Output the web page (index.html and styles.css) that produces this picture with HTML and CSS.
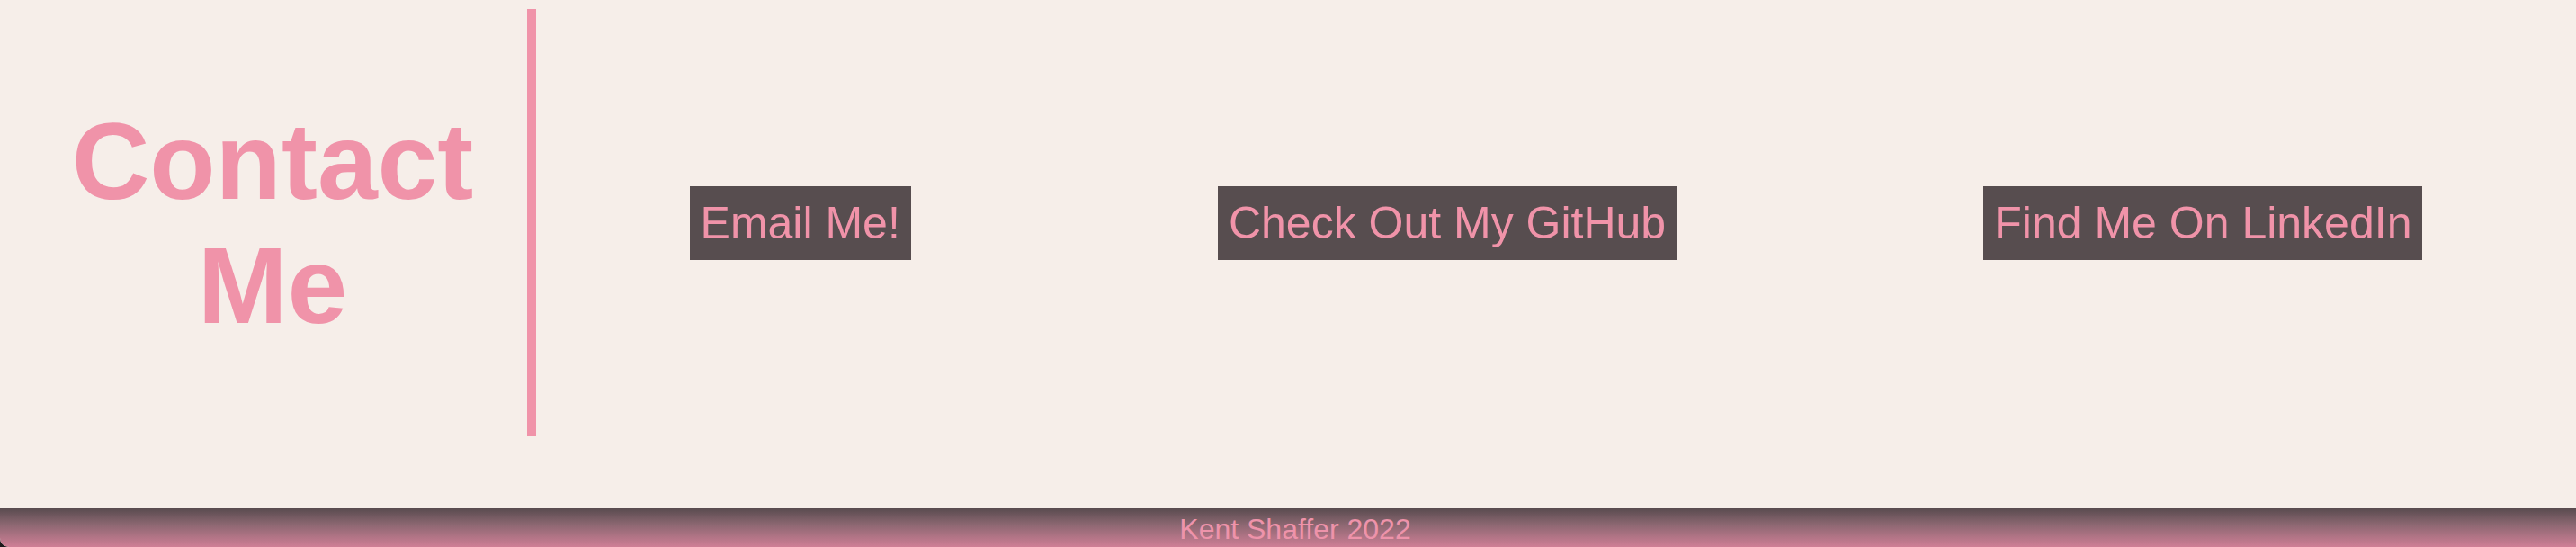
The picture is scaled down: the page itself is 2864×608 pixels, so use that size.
FILE: index.html
```html
<!DOCTYPE html>
<html lang="en">
<head>
<meta charset="utf-8">
<title>Contact Me</title>
<link rel="stylesheet" href="styles.css">
</head>
<body>
<div class="page">
  <main class="contact">
    <h1 class="contact-title">Contact Me</h1>
    <div class="divider"></div>
    <nav class="links">
      <a class="link-btn" href="#">Email Me!</a>
      <a class="link-btn" href="#">Check Out My GitHub</a>
      <a class="link-btn" href="#">Find Me On LinkedIn</a>
    </nav>
  </main>
  <footer class="footer">Kent Shaffer 2022</footer>
</div>
</body>
</html>
```

FILE: styles.css
```css
html {
  background: #1c1a1b;
}
body {
  margin: 0;
  font-family: "Liberation Sans", Arial, sans-serif;
}
.page {
  height: 608px;
  display: flex;
  flex-direction: column;
  background: #f6eee9;
  border-bottom-left-radius: 10px;
  overflow: hidden;
}
.contact {
  height: 495px;
  display: flex;
  align-items: center;
}
.contact-title {
  box-sizing: border-box;
  width: 586px;
  padding-left: 20px;
  margin: 0;
  text-align: center;
  font-size: 120px;
  font-weight: bold;
  line-height: 138px;
  color: #f093a9;
}
.divider {
  width: 10px;
  align-self: stretch;
  margin: 10px 0;
  background: #f093a9;
}
.links {
  flex: 1;
  display: flex;
  justify-content: space-around;
  align-items: center;
}
.link-btn {
  display: block;
  padding: 12px;
  font-size: 50px;
  line-height: 58px;
  color: #f093a9;
  background: #574d4f;
  text-decoration: none;
}
.footer {
  margin-top: auto;
  height: 43px;
  box-sizing: border-box;
  padding-top: 5px;
  padding-left: 16px;
  text-align: center;
  font-size: 32px;
  line-height: 37px;
  color: #ee93aa;
  background: linear-gradient(to bottom, #594b4f 0%, #8a6670 40%, #cf7f96 100%);
}
```
